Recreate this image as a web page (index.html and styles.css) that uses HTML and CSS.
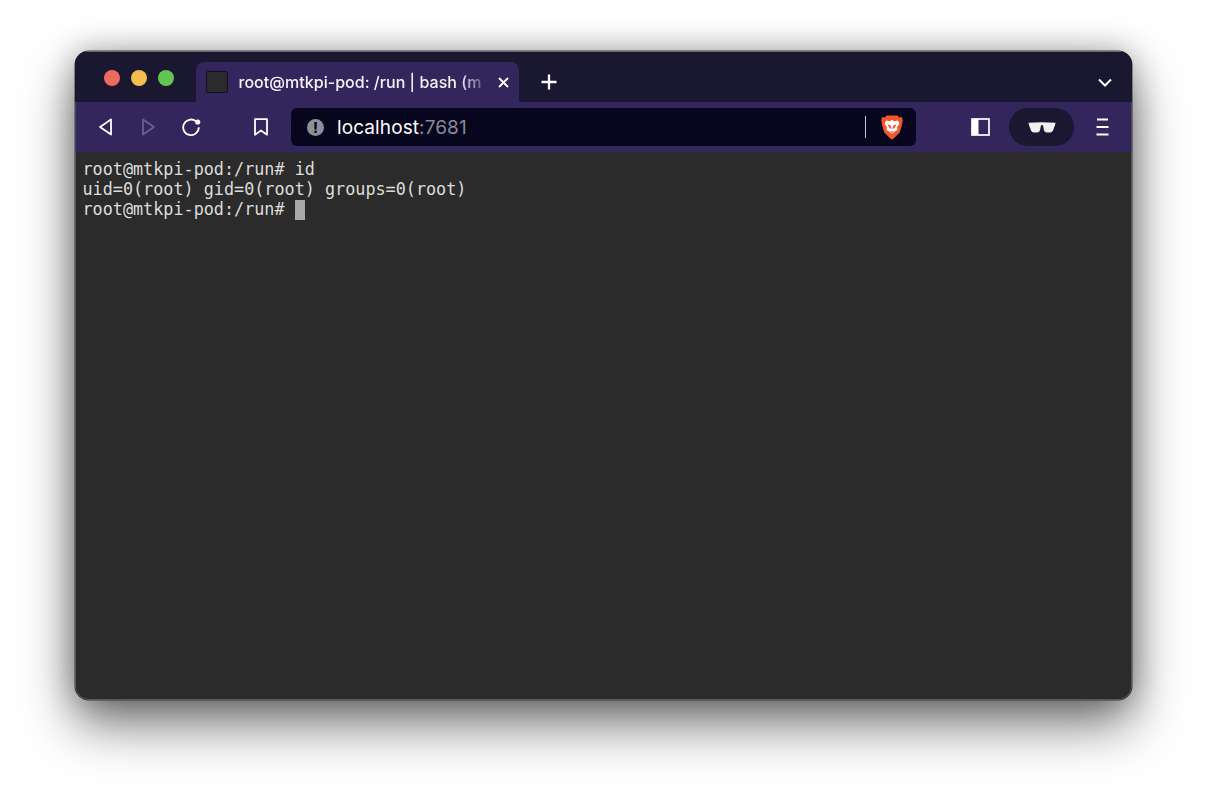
FILE: index.html
```html
<!DOCTYPE html>
<html lang="en">
<head>
<meta charset="utf-8">
<title>root@mtkpi-pod: /run | bash</title>
<link rel="stylesheet" href="styles.css">
</head>
<body>
<div class="window">
  <div class="tabstrip">
    <div class="lights">
      <span class="light red"></span>
      <span class="light yellow"></span>
      <span class="light green"></span>
    </div>
    <div class="tab">
      <span class="favicon"></span>
      <span class="tab-title">root@mtkpi-pod: /run | bash (m</span>
      <svg class="tab-close" width="11" height="11" viewBox="0 0 11 11"><path d="M1 1l9 9M10 1L1 10" stroke="#fff" stroke-width="1.8" fill="none"/></svg>
    </div>
    <svg class="new-tab" width="16" height="16" viewBox="0 0 16 16"><path d="M8 0.5v15M0.5 8h15" stroke="#fff" stroke-width="2.3" fill="none"/></svg>
    <svg class="tab-menu" width="14" height="9" viewBox="0 0 14 9"><path d="M1 1.500l6 6 6-6" stroke="#fff" stroke-width="2" fill="none"/></svg>
  </div>
  <div class="toolbar">
    <div class="nav">
      <svg class="icon" width="13" height="18" viewBox="0 0 13 18"><path d="M12 1.500v15L1 9z" stroke="#fff" stroke-width="1.800" stroke-linejoin="round" fill="none"/></svg>
      <svg class="icon" width="13" height="18" viewBox="0 0 13 18"><path d="M1 1.500v15L12 9z" stroke="#6b5f8e" stroke-width="1.800" stroke-linejoin="round" fill="none"/></svg>
      <svg class="icon reload" width="19" height="18" viewBox="0 0 19 18"><path d="M13.800 3.200A7.800 7.800 0 1 0 16.800 9.300" stroke="#fff" stroke-width="1.800" fill="none"/><circle cx="15.700" cy="4" r="2.600" fill="#fff"/></svg>
    </div>
    <svg class="bookmark" width="14" height="18" viewBox="0 0 14 18"><path d="M1 1.200h12v15.500l-6-4.200-6 4.200z" stroke="#fff" stroke-width="1.800" stroke-linejoin="round" fill="none"/></svg>
    <div class="urlbar">
      <span class="info">!</span>
      <span class="url">localhost<span class="port">:7681</span></span>
      <span class="url-divider"></span>
      <svg class="brave" width="22" height="25" viewBox="0 0 22 25"><path d="M5.500 0.500h11l1.600 1.900 2.700-.3.900 3-1 5.900-2 6.400-6.200 6.400q-1.500 1-3 0L3.300 17.400l-2-6.400-1-5.900.9-3 2.700.3z" fill="#f1562b"/><path d="M5.200 5.500l3.300.7L11 5l2.500 1.200 3.300-.7 1.700 3.300-2.700 3.700.8 2.500-3.200 1.700L11 19l-2.400-2.300-3.200-1.700.8-2.500L3.500 8.800z" fill="#fff"/><path d="M6.500 9.500l3 .8L11 14.500l1.500-4.200 3-.8-2.300 4h-4.400zM9 16.300h4L11 18z" fill="#f1562b"/></svg>
    </div>
    <svg class="sidebar" width="19" height="18" viewBox="0 0 19 18"><rect x="1" y="1" width="17" height="16" stroke="#fff" stroke-width="1.700" fill="none"/><rect x="1" y="1" width="6.500" height="16" fill="#fff"/></svg>
    <div class="private">
      <svg width="28" height="11" viewBox="0 0 28 11"><path d="M0.500 0.800Q14 -0.200 27.500 0.800L27 3.200l-2 5.300q-.7 2-3 2h-3q-2.300 0-3-2L15 3.300h-2l-1 5.200q-.7 2-3 2H6q-2.300 0-3-2L1 3.200z" fill="#f0f0f2"/></svg>
    </div>
    <svg class="menu" width="13" height="18" viewBox="0 0 13 18"><path d="M1 1.500h11M0.500 9h12M0.500 16.500h12" stroke="#fff" stroke-width="1.800" fill="none"/></svg>
  </div>
  <div class="terminal">
    <div class="term-line">root@mtkpi-pod:/run# id</div>
    <div class="term-line">uid=0(root) gid=0(root) groups=0(root)</div>
    <div class="term-line">root@mtkpi-pod:/run# <span class="cursor"></span></div>
  </div>
</div>
</body>
</html>
```
FILE: styles.css
```css
* { box-sizing: border-box; }
html, body { margin: 0; height: 100%; background: #fff; overflow: hidden; }
body {
  padding: 51px 75px 0;
  font-family: "Inter", "Liberation Sans", sans-serif;
}
.window {
  width: 1057px;
  height: 649px;
  display: flex;
  flex-direction: column;
  border-radius: 14px;
  overflow: hidden;
  background: #2b2b2b;
  box-shadow: 0 0 0 0.5px #3a3a3c, 0 24px 52px rgba(0,0,0,.55), 0 0 30px rgba(0,0,0,.28);
}
.tabstrip {
  height: 51px;
  flex: none;
  display: flex;
  align-items: flex-end;
  background: #1a1730;
  border-top: 1.5px solid #6a6a70;
}
.lights { display: flex; gap: 11px; width: 121px; padding-left: 29px; align-self: flex-start; padding-top: 17.5px; }
.light { width: 16px; height: 16px; border-radius: 50%; }
.red { background: #ee6a5f; }
.yellow { background: #f5bd4f; }
.green { background: #61c454; }
.tab {
  width: 323px;
  height: 40px;
  background: #32265c;
  border-radius: 8px 8px 0 0;
  display: flex;
  align-items: center;
  padding: 0 10.5px 0 9.5px;
  color: #fff;
}
.favicon {
  flex: none;
  width: 22px;
  height: 22px;
  background: #2b2b2b;
  border: 1px solid #12101f;
  border-radius: 2px;
  margin-right: 11px;
}
.tab-title {
  flex: 1;
  font-size: 16px;
  font-weight: 500;
  letter-spacing: 0.03px;
  color: #f3f2f7;
  white-space: nowrap;
  min-width: 0;
  -webkit-mask-image: linear-gradient(to left, transparent 0, #000 30px);
  mask-image: linear-gradient(to left, transparent 0, #000 30px);
}
.tab-close { flex: none; margin-left: 8px; }
.new-tab { margin: 0 0 12px 22px; }
.tab-menu { margin: 0 20px 15px auto; }
.toolbar {
  height: 50px;
  flex: none;
  background: #32265c;
  display: flex;
  align-items: center;
  padding-left: 23px;
  border-right: 1px solid #4a4560;
  border-left: 1px solid #4a4560;
}
.nav { display: flex; align-items: center; gap: 30px; }
.icon { display: block; }
.reload { margin-left: -3px; }
.bookmark { margin-left: 53px; }
.urlbar {
  width: 625px;
  height: 38px;
  margin-left: 23px;
  background: #08051f;
  border-radius: 6px;
  display: flex;
  align-items: center;
  padding: 0 13px 0 16px;
}
.info {
  width: 17px;
  height: 17px;
  border-radius: 50%;
  background: #8f9096;
  color: #08051f;
  font-size: 14px;
  font-weight: 800;
  line-height: 17px;
  text-align: center;
  flex: none;
}
.url { flex: 1; margin-left: 13px; font-size: 19px; letter-spacing: 0.1px; color: #fff; white-space: nowrap; }
.port { color: #8a8a94; }
.url-divider { width: 1px; height: 22px; background: #c9c9cf; flex: none; margin-right: 15px; }
.brave { flex: none; }
.sidebar { margin-left: 55px; }
.private {
  width: 65px;
  height: 38px;
  margin-left: 19px;
  border-radius: 19px;
  background: #1a1730;
  display: flex;
  align-items: center;
  justify-content: center;
}
.menu { margin-left: 22px; }
.terminal {
  flex: 1;
  background: #2b2b2b;
  padding: 7px 6.5px 0;
  font-family: "DejaVu Sans Mono", "Liberation Mono", monospace;
  font-size: 16.8px;
  line-height: 20px;
  color: #dcdcdc;
  border: solid #58585a;
  border-width: 0 1.5px 1.5px;
  border-radius: 0 0 14px 14px;
}
.term-line { height: 20px; white-space: pre; }
.cursor { display: inline-block; width: 10px; height: 20px; margin-top: 1px; background: #a8a8a8; vertical-align: top; }
```
